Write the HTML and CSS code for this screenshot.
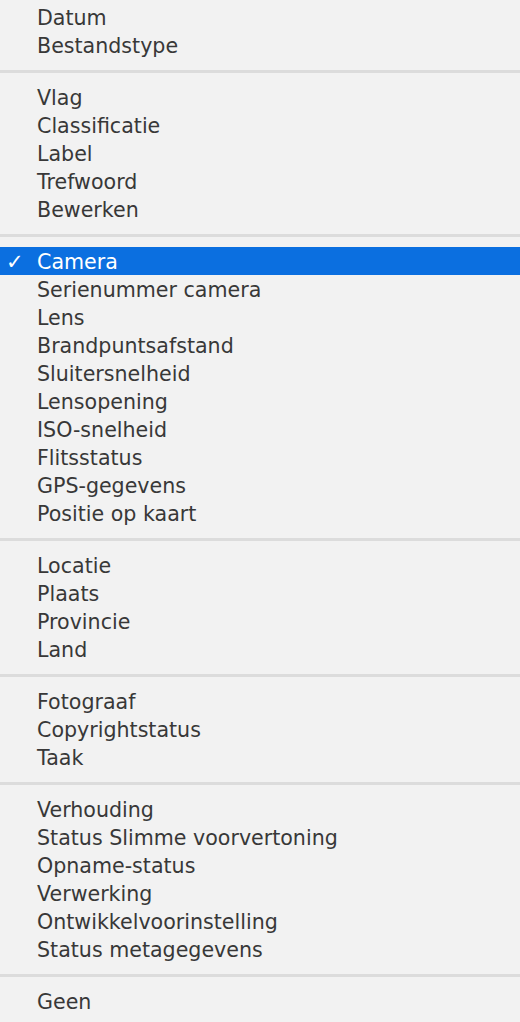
FILE: index.html
```html
<!DOCTYPE html>
<html lang="nl">
<head>
  <meta charset="UTF-8" />
  <title>Weergave-opties</title>
  <link rel="stylesheet" href="styles.css">
</head>
<body>
  <div class="menu">
    <ul class="menu-group">
      <li class="menu-item">Datum</li>
      <li class="menu-item">Bestandstype</li>
    </ul>
    <div class="separator"></div>
    <ul class="menu-group">
      <li class="menu-item">Vlag</li>
      <li class="menu-item">Classificatie</li>
      <li class="menu-item">Label</li>
      <li class="menu-item">Trefwoord</li>
      <li class="menu-item">Bewerken</li>
    </ul>
    <div class="separator"></div>
    <ul class="menu-group">
      <li class="menu-item selected"><span class="check">✓</span>Camera</li>
      <li class="menu-item">Serienummer camera</li>
      <li class="menu-item">Lens</li>
      <li class="menu-item">Brandpuntsafstand</li>
      <li class="menu-item">Sluitersnelheid</li>
      <li class="menu-item">Lensopening</li>
      <li class="menu-item">ISO-snelheid</li>
      <li class="menu-item">Flitsstatus</li>
      <li class="menu-item">GPS-gegevens</li>
      <li class="menu-item">Positie op kaart</li>
    </ul>
    <div class="separator"></div>
    <ul class="menu-group">
      <li class="menu-item">Locatie</li>
      <li class="menu-item">Plaats</li>
      <li class="menu-item">Provincie</li>
      <li class="menu-item">Land</li>
    </ul>
    <div class="separator"></div>
    <ul class="menu-group">
      <li class="menu-item">Fotograaf</li>
      <li class="menu-item">Copyrightstatus</li>
      <li class="menu-item">Taak</li>
    </ul>
    <div class="separator"></div>
    <ul class="menu-group">
      <li class="menu-item">Verhouding</li>
      <li class="menu-item">Status Slimme voorvertoning</li>
      <li class="menu-item">Opname-status</li>
      <li class="menu-item">Verwerking</li>
      <li class="menu-item">Ontwikkelvoorinstelling</li>
      <li class="menu-item">Status metagegevens</li>
    </ul>
    <div class="separator"></div>
    <ul class="menu-group">
      <li class="menu-item">Geen</li>
    </ul>
  </div>
</body>
</html>
```

FILE: styles.css
```css
html, body {
  margin: 0;
  padding: 0;
  background-color: #f2f2f2;
}
body {
  font-family: "DejaVu Sans", "Open Sans", sans-serif;
  font-size: 20.6px;
  color: #383838;
}
.menu {
  padding-top: 3px;
}
.menu-group {
  list-style: none;
  margin: 0;
  padding: 0;
}
.menu-item {
  position: relative;
  height: 27px;
  padding-top: 1px;
  line-height: 28px;
  padding-left: 37px;
  white-space: nowrap;
}
.menu-item.selected {
  background-color: #0b6fe0;
  color: white;
}
.check {
  position: absolute;
  left: 6px;
  top: 1px;
  font-size: 21px;
}
.separator {
  height: 24px;
  display: flex;
  align-items: center;
}
.separator::before {
  content: "";
  display: block;
  width: 100%;
  height: 3px;
  background-color: #dcdcdc;
}
```
